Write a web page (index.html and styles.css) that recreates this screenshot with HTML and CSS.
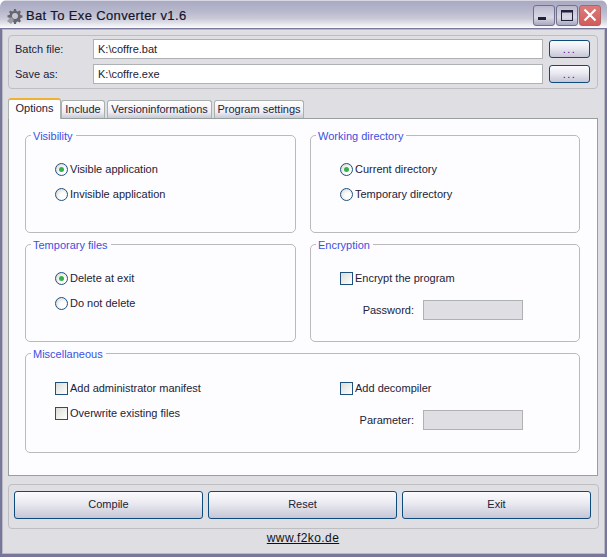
FILE: index.html
```html
<!DOCTYPE html>
<html lang="en">
<head>
<meta charset="utf-8">
<title>Bat To Exe Converter v1.6</title>
<link rel="stylesheet" href="styles.css">
</head>
<body>
<div class="window">
  <header class="titlebar">
    <svg class="app-icon" width="16" height="16" viewBox="0 0 16 16"><path d="M7 1h2l.4 2 1.500.6 1.700-1.100 1.400 1.400-1.100 1.700.6 1.500 2 .4v2l-2 .4-.6 1.500 1.100 1.700-1.400 1.400-1.700-1.100-1.500.6-.4 2H7l-.4-2-1.500-.6-1.700 1.100L2 12.900l1.100-1.700-.6-1.500-2-.4v-2l2-.4.6-1.500L2 3.900l1.400-1.400 1.700 1.100 1.500-.6z" fill="#66666f"/><circle cx="8" cy="8" r="3" fill="#c5c5d3"/><path d="M0 13l4-4 3 3-3 4z" fill="#9a9aa5"/></svg>
    <h1 class="title">Bat To Exe Converter v1.6</h1>
    <div class="controls">
      <span class="ctl"><svg width="22" height="21" viewBox="0 0 22 21"><rect x="5" y="12" width="8" height="3" fill="#22223c"/></svg></span>
      <span class="ctl"><svg width="22" height="21" viewBox="0 0 22 21"><rect x="5.500" y="5.500" width="11" height="10" fill="none" stroke="#22223c"/><rect x="5" y="5" width="12" height="2.500" fill="#22223c"/></svg></span>
      <span class="ctl close"><svg width="22" height="21" viewBox="0 0 22 21"><path d="M5.500 4.500l11 11M16.500 4.500l-11 11" stroke="#fff" stroke-width="2.200"/></svg></span>
    </div>
  </header>
  <main class="client">
    <section class="paths">
      <div class="path-row">
        <label class="path-label">Batch file:</label>
        <div class="input">K:\coffre.bat</div>
        <button class="btn browse">...</button>
      </div>
      <div class="path-row">
        <label class="path-label">Save as:</label>
        <div class="input">K:\coffre.exe</div>
        <button class="btn browse">...</button>
      </div>
    </section>
    <nav class="tabs">
      <span class="tab active">Options</span>
      <span class="tab t-inc">Include</span>
      <span class="tab t-ver">Versioninformations</span>
      <span class="tab t-pro">Program settings</span>
    </nav>
    <section class="panel">
      <fieldset class="group">
        <legend>Visibility</legend>
        <div class="opts">
          <div class="opt"><span class="radio on"></span>Visible application</div>
          <div class="opt"><span class="radio"></span>Invisible application</div>
        </div>
      </fieldset>
      <fieldset class="group">
        <legend>Working directory</legend>
        <div class="opts">
          <div class="opt"><span class="radio on"></span>Current directory</div>
          <div class="opt"><span class="radio"></span>Temporary directory</div>
        </div>
      </fieldset>
      <fieldset class="group">
        <legend>Temporary files</legend>
        <div class="opts">
          <div class="opt"><span class="radio on"></span>Delete at exit</div>
          <div class="opt"><span class="radio"></span>Do not delete</div>
        </div>
      </fieldset>
      <fieldset class="group">
        <legend>Encryption</legend>
        <div class="opts">
          <div class="opt"><span class="check"></span>Encrypt the program</div>
          <div class="field"><span>Password:</span><span class="disabled"></span></div>
        </div>
      </fieldset>
      <fieldset class="group wide">
        <legend>Miscellaneous</legend>
        <div class="misc">
          <div class="opts">
            <div class="opt"><span class="check"></span>Add administrator manifest</div>
            <div class="opt"><span class="check"></span>Overwrite existing files</div>
          </div>
          <div class="opts">
            <div class="opt"><span class="check"></span>Add decompiler</div>
            <div class="field"><span>Parameter:</span><span class="disabled"></span></div>
          </div>
        </div>
      </fieldset>
    </section>
    <section class="actions">
      <button class="btn action">Compile</button>
      <button class="btn action">Reset</button>
      <button class="btn action">Exit</button>
    </section>
    <footer class="footer"><a class="link" href="#">www.f2ko.de</a></footer>
  </main>
</div>
</body>
</html>
```
FILE: styles.css
```css
* { box-sizing: border-box; }
html, body { margin: 0; padding: 0; }
body {
  width: 607px;
  height: 557px;
  overflow: hidden;
  background: #fff;
  font-family: "Liberation Sans", Arial, sans-serif;
  font-size: 11px;
  color: #222238;
}
.window {
  width: 607px;
  height: 557px;
  display: flex;
  flex-direction: column;
  background: #dfdfe3;
  border-radius: 7px 7px 0 0;
  overflow: hidden;
}
.titlebar {
  height: 29px;
  flex: none;
  display: flex;
  align-items: center;
  padding: 2px 6px 0 7px;
  border-top: 1px solid #d8d8e4;
  border-bottom: 1px solid #77779a;
  background: linear-gradient(#a9a9c3 0, #b4b4ca 30%, #c9c9d8 65%, #f4f4f8 95%, #ffffff 100%);
}
.app-icon { flex: none; margin-right: 3px; }
.title {
  margin: 0;
  flex: 1;
  font-size: 13px;
  font-weight: normal;
  color: #14142a;
  letter-spacing: .36px;
  -webkit-text-stroke: .2px #14142a;
}
.controls { display: flex; gap: 1px; }
.ctl {
  width: 22px;
  height: 21px;
  border: 1px solid #70708f;
  border-radius: 3px;
  background: linear-gradient(#b9b9cd, #d9d9e4 60%, #a9a9c0);
  display: block;
  overflow: hidden;
}
.ctl svg { display: block; margin: -1px; }
.close {
  background: linear-gradient(#dc7c7c, #d25a5a);
  border-color: #a66;
}
.client {
  flex: 1;
  padding: 6px 9px 0 8px;
  border: solid #77779a;
  border-width: 0 2px 3px 2px;
  display: flex;
  flex-direction: column;
  box-shadow: inset 0 0 0 1px #b9b9c6;
}
.paths {
  margin: 0 0 0 -2px;
  height: 54px;
  width: 590px;
  border: 1px solid #bdbdc2;
  border-radius: 4px;
  padding: 3px 6px 0 6px;
  display: flex;
  flex-direction: column;
  gap: 5px;
  flex: none;
}
.path-row { display: flex; align-items: center; height: 20px; }
.path-label { width: 78px; flex: none; }
.input {
  width: 450px;
  height: 20px;
  background: #fff;
  border: 1px solid #aeb2b4;
  padding: 2px 4px;
  line-height: 14px;
}
.btn {
  font: inherit;
  color: inherit;
  border: 1px solid #0f4a7c;
  border-radius: 3px;
  background: linear-gradient(#fbfbfe, #e9e9f1 45%, #c6c6d6);
  padding: 0;
}
.browse {
  width: 41px;
  height: 18px;
  margin-left: 6px;
  color: #5200a0;
  letter-spacing: 1.500px;
  line-height: 14px;
}
.tabs {
  margin: 8px 0 0 -2px;
  height: 21px;
  display: flex;
  align-items: flex-end;
  flex: none;
  position: relative;
  z-index: 1;
}
.tab {
  height: 18px;
  margin-right: 2px;
  border: 1px solid #a9b0ae;
  border-bottom: 0;
  border-radius: 3px 3px 0 0;
  background: linear-gradient(#fff, #eeeef4 65%, #c9c9d8);
  line-height: 17px;
  white-space: nowrap;
  text-align: center;
}
.t-inc { width: 44px; }
.t-ver { width: 105px; }
.t-pro { width: 90px; }
.tab.active {
  height: 21px;
  width: 53px;
  margin-right: 0;
  background: #fdfdff;
  border-top: 2px solid #f0b030;
  line-height: 17px;
  margin-bottom: -1px;
}
.panel {
  margin: 0 0 0 -2px;
  width: 590px;
  height: 358px;
  flex: none;
  background: #fdfdff;
  border: 1px solid #96a09d;
  padding: 9px 17px 0 16px;
  display: grid;
  grid-template-columns: 271px 270px;
  grid-template-rows: 105px 105px 107px;
  column-gap: 14px;
  row-gap: 4px;
}
.group {
  margin: 0;
  padding: 0;
  min-width: 0;
  border: 1px solid #bbb9bc;
  border-radius: 5px;
  position: relative;
}
.group legend {
  margin-left: 5px;
  padding: 2px 3px 0 2px;
  color: #3c50e0;
  line-height: 13px;
}
.wide { grid-column: 1 / 3; }
.opts { padding: 18px 0 0 29px; display: flex; flex-direction: column; gap: 9px; }
.opt { display: flex; align-items: center; height: 16px; gap: 2px; white-space: nowrap; }
.radio {
  width: 13px;
  height: 13px;
  flex: none;
  border: 1px solid #1c5180;
  border-radius: 50%;
  background: radial-gradient(circle at 65% 65%, #fff 30%, #dcdcd6 80%);
  position: relative;
}
.radio.on::after {
  content: "";
  position: absolute;
  left: 3px;
  top: 3px;
  width: 5px;
  height: 5px;
  border-radius: 50%;
  background: #36b04a;
}
.check {
  width: 13px;
  height: 13px;
  flex: none;
  border: 1px solid #1c5180;
  background: linear-gradient(135deg, #dcdcd6, #fff);
}
.field {
  display: flex;
  align-items: center;
  justify-content: flex-end;
  gap: 9px;
  height: 20px;
  width: 183px;
  margin-top: 5px;
}
.disabled {
  width: 100px;
  height: 20px;
  flex: none;
  background: #dfdfe3;
  border: 1px solid #aeb2b4;
}
.misc { display: grid; grid-template-columns: 285px 1fr; margin-top: 1px; }
.actions {
  margin: 8px 0 0 -2px;
  height: 45px;
  width: 591px;
  flex: none;
  border: 1px solid #bdbdc2;
  border-radius: 4px;
  padding: 6px 7px 0 5px;
  display: grid;
  grid-template-columns: repeat(3, 1fr);
  column-gap: 5px;
}
.action { height: 28px; padding-bottom: 2px; }
.footer { text-align: center; margin-top: 2px; font-size: 12px; letter-spacing: .4px; }
.link { color: #111; text-decoration: underline; }
```
